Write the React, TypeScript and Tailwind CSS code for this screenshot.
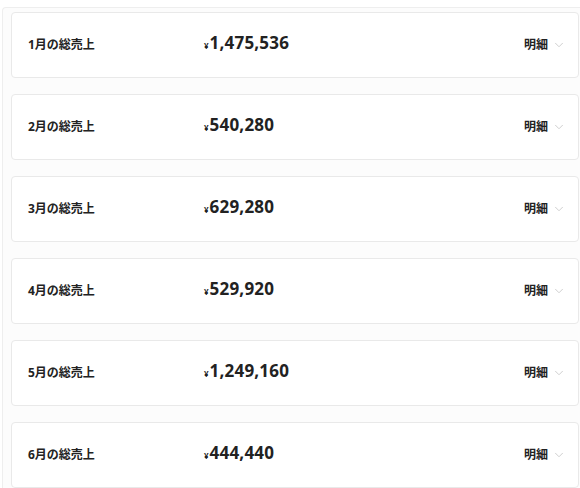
import { ChevronDown } from 'lucide-react'

const months = [
  { label: '1月の総売上', total: '1,475,536' },
  { label: '2月の総売上', total: '540,280' },
  { label: '3月の総売上', total: '629,280' },
  { label: '4月の総売上', total: '529,920' },
  { label: '5月の総売上', total: '1,249,160' },
  { label: '6月の総売上', total: '444,440' },
]

function MonthRow({ label, total }: { label: string; total: string }) {
  return (
    <div className="flex h-[66px] items-center rounded-[4px] border border-[#e9e9e9] bg-white pl-4 pr-[12px]">
      <div className="w-[175px] shrink-0 text-[12px] font-bold text-[#222]">{label}</div>
      <div className="-mt-1 flex flex-1 items-baseline gap-[1px] pl-[1px] text-[#222]">
        <span className="text-[8px] font-bold">¥</span>
        <span className="text-[17px] font-bold tracking-[0.2px]">{total}</span>
      </div>
      <button type="button" className="flex items-center gap-[4px] text-[12px] font-bold text-[#222]">
        明細
        <ChevronDown className="h-[14px] w-[14px] text-[#c8c8c8]" strokeWidth={1.5} />
      </button>
    </div>
  )
}

export default function App() {
  return (
    <div
      className="h-[488px] w-[580px] overflow-hidden bg-white pl-[2px] pt-[7px]"
      style={{ fontFamily: '"Open Sans", "Noto Sans CJK JP", sans-serif' }}
    >
      <div className="-mr-4 rounded-tl-[4px] border-l border-t border-[#eeeeee] bg-[#fcfcfc] pl-2 pt-1">
        <div className="mr-[1px] flex w-[568px] flex-col gap-4 pb-4">
          {months.map((m) => (
            <MonthRow key={m.label} label={m.label} total={m.total} />
          ))}
        </div>
      </div>
    </div>
  )
}
